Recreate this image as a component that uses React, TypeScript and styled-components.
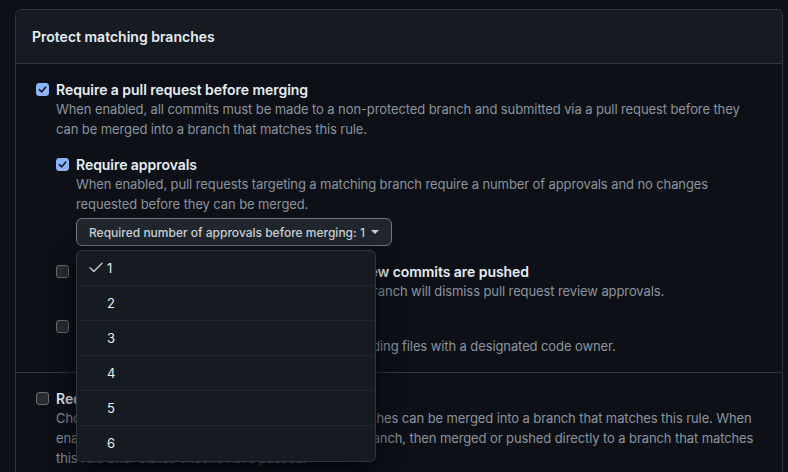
import React from 'react'
import styled, { createGlobalStyle } from 'styled-components'

const GlobalStyle = createGlobalStyle`
  html, body {
    margin: 0;
    padding: 0;
    background: #0d1117;
    height: 100%;
    overflow: hidden;
  }
  body {
    font-family: Inter, 'Noto Sans', sans-serif;
    -webkit-font-smoothing: antialiased;
  }
`

const Page = styled.div`
  padding: 9px 6px 0 15px;
`

const Box = styled.div`
  width: 768px;
  box-sizing: border-box;
  border: 1px solid #30363d;
  border-radius: 6px;
  background: #0d1117;
`

const BoxHeader = styled.div`
  background: #161b22;
  border-bottom: 1px solid #30363d;
  border-radius: 6px 6px 0 0;
  padding: 16px;
  height: 21px;
  color: #e6edf3;
  font-size: 14px;
  font-weight: 600;
  line-height: 21px;
`

const Section = styled.div<{ $last?: boolean }>`
  padding: 16px 16px 16px 20px;
  border-bottom: ${(p) => (p.$last ? 'none' : '1px solid #30363d')};
  display: flex;
  flex-direction: column;
  gap: 16px;
`

const Row = styled.div<{ $indent?: boolean }>`
  display: flex;
  align-items: flex-start;
  gap: 7px;
  margin-left: ${(p) => (p.$indent ? '20px' : '0')};
`

const Check = styled.span<{ $checked?: boolean }>`
  flex: none;
  width: 13px;
  height: 13px;
  margin-top: 3px;
  box-sizing: border-box;
  border-radius: 3px;
  display: flex;
  align-items: center;
  justify-content: center;
  background: ${(p) => (p.$checked ? '#8cb4f7' : '#2b2c2e')};
  border: 1px solid ${(p) => (p.$checked ? '#8cb4f7' : '#6b6d72')};
`

const Body = styled.div`
  flex: 1;
  min-width: 0;
  display: flex;
  flex-direction: column;
`

const Title = styled.div`
  color: #e6edf3;
  font-size: 14px;
  font-weight: 600;
  line-height: 19px;
  letter-spacing: -0.05px;
`

const Note = styled.div`
  color: #8b949e;
  font-size: 13px;
  line-height: 20px;
  letter-spacing: -0.1px;
`

const SelectWrap = styled.div`
  position: relative;
  margin-top: 4px;
  align-self: flex-start;
`

const SelectButton = styled.button`
  display: flex;
  align-items: center;
  gap: 4px;
  height: 28px;
  padding: 0 12px;
  box-sizing: border-box;
  background: #21262d;
  border: 1px solid #6e7681;
  border-radius: 6px;
  color: #c9d1d9;
  font-family: inherit;
  font-size: 12px;
  font-weight: 500;
`

const Caret = styled.span`
  width: 0;
  height: 0;
  margin-left: 2px;
  border-left: 4px solid transparent;
  border-right: 4px solid transparent;
  border-top: 4px solid #c9d1d9;
`

const Menu = styled.div`
  position: absolute;
  top: 32px;
  left: 0;
  width: 300px;
  z-index: 10;
  box-sizing: border-box;
  background: #161b22;
  border: 1px solid #30363d;
  border-radius: 6px;
  box-shadow: 0 8px 24px rgba(1, 4, 9, 0.85);
  overflow: hidden;
`

const MenuItem = styled.div`
  display: flex;
  align-items: center;
  height: 35px;
  box-sizing: border-box;
  padding-left: 12px;
  padding-bottom: 1px;
  color: #e6edf3;
  font-size: 13px;
  border-bottom: 1px solid #21262d;
  &:last-child {
    border-bottom: none;
  }
`

const CheckSlot = styled.span`
  width: 18px;
  display: flex;
  align-items: center;
`

const TickMark = ({ color }: { color: string }) => (
  <svg width="9" height="9" viewBox="0 0 10 10" fill="none">
    <path d="M1.5 5.2 L4 7.6 L8.6 2.4" stroke={color} strokeWidth="1.8" strokeLinecap="round" strokeLinejoin="round" />
  </svg>
)

const MenuCheck = () => (
  <svg width="14" height="11" viewBox="0 0 14 11" fill="none">
    <path d="M1 5.8 L4.8 9.5 L13 1.2" stroke="#c9d1d9" strokeWidth="1.3" strokeLinecap="round" strokeLinejoin="round" />
  </svg>
)

const CheckBox = ({ checked }: { checked?: boolean }) => (
  <Check $checked={checked}>{checked && <TickMark color="#1c2128" />}</Check>
)

const approvals = [1, 2, 3, 4, 5, 6]

export default function App() {
  return (
    <>
      <GlobalStyle />
      <Page>
        <Box>
          <BoxHeader>Protect matching branches</BoxHeader>
          <Section>
            <Row>
              <CheckBox checked />
              <Body>
                <Title>Require a pull request before merging</Title>
                <Note>
                  When enabled, all commits must be made to a non-protected branch and submitted via a pull request
                  before they
                  <br />
                  can be merged into a branch that matches this rule.
                </Note>
              </Body>
            </Row>
            <Row $indent>
              <CheckBox checked />
              <Body>
                <Title>Require approvals</Title>
                <Note>
                  When enabled, pull requests targeting a matching branch require a number of approvals and no changes
                  requested before they can be merged.
                </Note>
                <SelectWrap>
                  <SelectButton>
                    Required number of approvals before merging: 1 <Caret />
                  </SelectButton>
                  <Menu>
                    {approvals.map((n) => (
                      <MenuItem key={n}>
                        <CheckSlot>{n === 1 && <MenuCheck />}</CheckSlot>
                        {n}
                      </MenuItem>
                    ))}
                  </Menu>
                </SelectWrap>
              </Body>
            </Row>
            <Row $indent>
              <CheckBox />
              <Body>
                <Title>Dismiss stale pull request approvals when new commits are pushed</Title>
                <Note>
                  New reviewable commits pushed to a matching branch will dismiss pull request review approvals.
                </Note>
              </Body>
            </Row>
            <Row $indent>
              <CheckBox />
              <Body>
                <Title>Require review from Code Owners</Title>
                <Note>
                  Require an approved review in pull requests including files with a designated code owner.
                </Note>
              </Body>
            </Row>
          </Section>
          <Section $last>
            <Row>
              <CheckBox />
              <Body>
                <Title>Require status checks to pass before merging</Title>
                <Note>
                  Choose which status checks must pass before branches can be merged into a branch that matches this
                  rule. When enabled, commits must first be pushed to another branch, then merged or pushed directly
                  to a branch that matches this rule after status checks have passed.
                </Note>
              </Body>
            </Row>
          </Section>
        </Box>
      </Page>
    </>
  )
}
